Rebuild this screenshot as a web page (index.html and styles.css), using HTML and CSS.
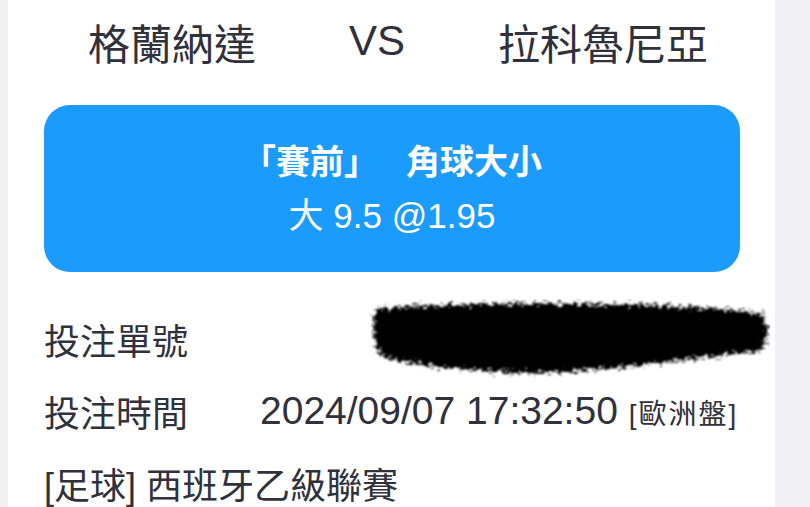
FILE: index.html
```html
<!DOCTYPE html>
<html lang="zh-Hant">

<head>
    <meta charset="UTF-8">
    <meta name="viewport" content="width=device-width, initial-scale=1.0">
    <title>注單詳情</title>
    <link rel="stylesheet" href="styles.css">
</head>

<body>
    <div class="ticket">

        <div class="matchup">
            <span class="team">格蘭納達</span>
            <span class="versus">VS</span>
            <span class="team">拉科魯尼亞</span>
        </div>

        <div class="bet-box">
            <p class="bet-title">「賽前」<span class="bet-market">角球大小</span></p>
            <p class="bet-pick">大 9.5 @1.95</p>
        </div>

        <div class="info-list">
            <div class="info-row">
                <span class="info-label">投注單號</span>
                <svg class="redacted" width="402" height="80" viewBox="0 0 402 80">
                    <defs>
                        <filter id="scribble" x="-5%" y="-20%" width="110%" height="140%">
                            <feTurbulence type="fractalNoise" baseFrequency="0.2 0.45" numOctaves="3" seed="7" />
                            <feDisplacementMap in="SourceGraphic" scale="16" xChannelSelector="R" yChannelSelector="G" />
                            <feGaussianBlur stdDeviation="0.9" />
                        </filter>
                    </defs>
                    <path d="M8 10 C 110 2, 300 2, 392 14 C 402 22, 402 40, 392 52 C 330 58, 250 72, 160 74 C 90 72, 30 64, 12 56 C 4 40, 4 22, 8 10 Z" fill="#000" filter="url(#scribble)" />
                </svg>
            </div>

            <div class="info-row">
                <span class="info-label">投注時間</span>
                <span class="info-time">2024/09/07 17:32:50 <span class="odds-type">[歐洲盤]</span></span>
            </div>

            <div class="info-row">
                <span class="league">[足球] 西班牙乙級聯賽</span>
            </div>
        </div>

    </div>
</body>

</html>
```

FILE: styles.css
```css
* {
    box-sizing: border-box;
    margin: 0;
    padding: 0;
    font-family: "Liberation Sans", "Noto Sans CJK TC", sans-serif;
}

body {
    background-color: #f0f0f5;
    height: 507px;
    overflow: hidden;
}

.ticket {
    margin-left: 8px;
    width: 767px;
    height: 507px;
    background-color: #fff;
    color: #30313b;
}

.matchup {
    display: flex;
    align-items: center;
    height: 82px;
    padding-left: 80px;
    gap: 93px;
    font-size: 42px;
}

.bet-box {
    margin: 23px 35px 0 36px;
    height: 167px;
    border-radius: 26px;
    background-color: #1b9bfb;
    color: #fff;
    display: flex;
    flex-direction: column;
    justify-content: center;
    align-items: center;
}

.bet-title {
    font-size: 34px;
    font-weight: bold;
    line-height: 54px;
}

.bet-market {
    margin-left: 28px;
}

.bet-pick {
    font-size: 35px;
    line-height: 54px;
}

.info-list {
    margin-top: 31px;
}

.info-row {
    display: flex;
    align-items: center;
    height: 72px;
    padding-left: 36px;
    font-size: 36px;
}

.info-label {
    width: 216px;
    flex-shrink: 0;
}

.redacted {
    margin-left: 108px;
    flex-shrink: 0;
}

.info-time {
    font-size: 39px;
}

.odds-type {
    font-size: 28px;
    letter-spacing: 2px;
}
```
